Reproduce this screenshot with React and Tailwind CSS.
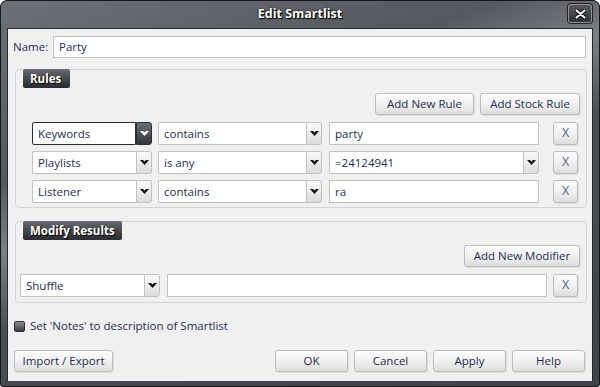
import React from 'react'

const ink = 'text-[#1f2d52]'

function Chevron({ light }) {
  return (
    <svg width="9" height="5" viewBox="0 0 9 5">
      <path d="M0 0 H3 L4.5 1.6 L6 0 H9 L4.5 5 Z" fill={light ? '#ffffff' : '#111111'} />
    </svg>
  )
}

function Button({ children, className = '' }) {
  return (
    <div
      className={`h-full flex items-center justify-center rounded-[3px] border border-[#bcbcbc] bg-gradient-to-b from-[#fdfdfd] via-[#f1f1f1] to-[#dedede] shadow-[1px_1px_0_rgba(0,0,0,0.08)] text-[11.5px] ${ink} ${className}`}
    >
      {children}
    </div>
  )
}

function Combo({ text, className = '', dark = false }) {
  return (
    <div className={`h-full flex ${className}`}>
      <div
        className={`flex-1 flex items-center pl-[5px] bg-white border text-[11.5px] ${ink} ${
          dark ? 'border-[#2e3034] rounded-l-[2px]' : 'border-[#c2c2c2] border-r-0 rounded-l-[2px]'
        }`}
      >
        {text}
      </div>
      <div
        className={`w-[16px] flex items-center justify-center rounded-r-[3px] border ${
          dark
            ? 'bg-gradient-to-b from-[#6c6f74] to-[#34373b] border-[#2e3034]'
            : 'bg-gradient-to-b from-[#fafafa] to-[#dcdcdc] border-[#c2c2c2]'
        }`}
      >
        <Chevron light={dark} />
      </div>
    </div>
  )
}

function Field({ text = '', className = '' }) {
  return (
    <div
      className={`h-full flex items-center pl-[5px] bg-white border border-[#c2c2c2] text-[11.5px] ${ink} ${className}`}
    >
      {text}
    </div>
  )
}

function XBtn() {
  return <Button className="w-[25px] !text-[12.5px] text-[#52628f]">X</Button>
}

function Tab({ children, className = '' }) {
  return (
    <div
      className={`-mt-px h-[19px] flex items-center pl-[7px] rounded-[2px] bg-gradient-to-b from-[#6a6d72] via-[#45484d] to-[#2a2c30] text-white font-bold text-[11.5px] [text-shadow:1px_1px_1px_#000] ${className}`}
    >
      {children}
    </div>
  )
}

const rules = [
  { field: 'Keywords', op: 'contains', value: 'party', dark: true },
  { field: 'Playlists', op: 'is any', value: '=24124941', combo: true },
  { field: 'Listener', op: 'contains', value: 'ra' },
]

export default function App() {
  return (
    <div className="w-[600px] h-[387px] bg-white font-['Open_Sans','Noto_Sans',sans-serif] leading-none">
      <div className="w-[600px] h-[387px] flex flex-col rounded-t-[7px] rounded-b-[3px] border border-[#16171a] bg-[#3d4045] bg-[linear-gradient(160deg,#6d7076_0%,#55585e_30%,#7c7f85_42%,#4a4d52_55%,#3f4247_100%)]">
        {/* Title bar */}
        <div className="h-[27px] relative flex items-center justify-center">
          <span className="text-white font-bold text-[12.5px] [text-shadow:0_0_2px_#000,1px_1px_1px_#000]">
            Edit Smartlist
          </span>
          <div className="absolute right-[7px] top-[3px] w-[24px] h-[19px] rounded-[3px] border border-[#8d9095] bg-gradient-to-b from-[#55585d] to-[#2f3236] flex items-center justify-center shadow-[0_0_0_1px_#222]">
            <svg width="11" height="10" viewBox="0 0 11 10">
              <path d="M1 1 L10 9 M10 1 L1 9" stroke="#000" strokeWidth="4" strokeLinecap="round" />
              <path d="M1.5 1.5 L9.5 8.5 M9.5 1.5 L1.5 8.5" stroke="#fff" strokeWidth="2.2" strokeLinecap="round" />
            </svg>
          </div>
        </div>

        {/* Content */}
        <div className="mx-[6px] h-[353px] bg-[#f0f0f0] border-t border-x border-[#26282b] flex flex-col">
          {/* Name */}
          <div className="mt-[7px] h-[22px] flex items-center pl-[5px] pr-[6px]">
            <span className={`w-[40px] text-[11.5px] ${ink}`}>Name:</span>
            <Field text="Party" className="flex-1" />
          </div>

          {/* Rules group */}
          <div className="mt-[11px] ml-[7px] mr-[5px] h-[139px] border border-[#d3d3d3] rounded-[4px] flex flex-col">
            <Tab className="ml-[7px] w-[47px]">Rules</Tab>
            <div className="mt-[5px] h-[22px] flex justify-end gap-[6px] pr-[6px]">
              <Button className="w-[99px]">Add New Rule</Button>
              <Button className="w-[100px]">Add Stock Rule</Button>
            </div>
            <div className="mt-[7px] flex flex-col gap-[6px] pl-[16px]">
              {rules.map((r) => (
                <div key={r.field} className="h-[23px] flex">
                  <Combo text={r.field} dark={r.dark} className="w-[120px]" />
                  <Combo text={r.op} className="w-[164px] ml-[6px]" />
                  {r.combo ? (
                    <Combo text={r.value} className="w-[210px] ml-[7px]" />
                  ) : (
                    <Field text={r.value} className="w-[210px] ml-[7px]" />
                  )}
                  <div className="ml-[14px]">
                    <XBtn />
                  </div>
                </div>
              ))}
            </div>
          </div>

          {/* Modify results group */}
          <div className="mt-[13px] ml-[7px] mr-[5px] h-[82px] border border-[#d3d3d3] rounded-[4px] flex flex-col">
            <Tab className="ml-[7px] w-[99px]">Modify Results</Tab>
            <div className="mt-[5px] h-[22px] flex justify-end pr-[6px]">
              <Button className="w-[116px]">Add New Modifier</Button>
            </div>
            <div className="mt-[7px] h-[23px] flex pl-[4px]">
              <Combo text="Shuffle" className="w-[140px]" />
              <Field className="w-[380px] ml-[7px]" />
              <div className="ml-[6px]">
                <XBtn />
              </div>
            </div>
          </div>

          {/* Checkbox */}
          <div className="mt-[17px] h-[12px] flex items-center pl-[6px] gap-[5px]">
            <div className="w-[11px] h-[11px] rounded-[2px] border border-[#2c2e32] bg-gradient-to-b from-[#8a8d92] to-[#3a3d42]" />
            <span className={`text-[11.5px] ${ink}`}>Set 'Notes' to description of Smartlist</span>
          </div>

          {/* Bottom buttons */}
          <div className="mt-[18px] h-[22px] flex pl-[6px] pr-[7px]">
            <Button className="w-[99px]">Import / Export</Button>
            <div className="flex-1" />
            <div className="flex gap-[6px]">
              <Button className="w-[73px]">OK</Button>
              <Button className="w-[73px]">Cancel</Button>
              <Button className="w-[73px]">Apply</Button>
              <Button className="w-[73px]">Help</Button>
            </div>
          </div>
        </div>
      </div>
    </div>
  )
}
